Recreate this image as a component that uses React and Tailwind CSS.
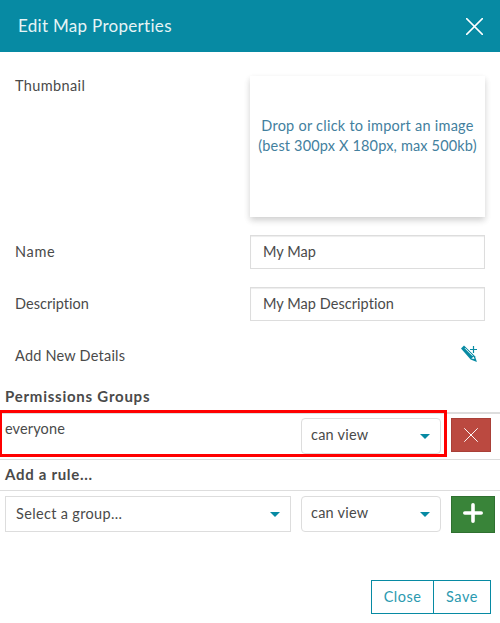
import React from 'react';

function Caret() {
  return (
    <svg width="10" height="5" viewBox="0 0 10 5" className="shrink-0">
      <path d="M0 0H10L5 5Z" fill="#078aa3" />
    </svg>
  );
}

function Cross({ size, stroke }) {
  return (
    <svg width={size} height={size} viewBox="0 0 16 16" fill="none" stroke="#fff" strokeWidth={stroke} strokeLinecap="round">
      <path d="M.6.6 15.4 15.4M15.4.6.6 15.4" />
    </svg>
  );
}

function PermissionSelect() {
  return (
    <div className="ml-[10px] flex h-9 w-[140px] shrink-0 items-center justify-between rounded border border-[#ddd] bg-white pl-[9px] pr-[10px]">
      <span className="-mt-[2px] tracking-[0.24px]">can view</span>
      <Caret />
    </div>
  );
}

function Field({ label, labelClass, value, valueClass }) {
  return (
    <div className="mb-[18px] flex h-[34px] items-center">
      <div className="w-[235px] shrink-0">
        <span className={labelClass}>{label}</span>
      </div>
      <div className="flex h-[34px] w-[235px] items-center border border-[#ddd] pl-3 shadow-[inset_0_1px_1px_rgba(0,0,0,0.075)]">
        <span className={valueClass}>{value}</span>
      </div>
    </div>
  );
}

export default function App() {
  return (
    <div className="relative flex h-[623px] w-[500px] flex-col overflow-hidden bg-white font-['Lato',sans-serif] text-[14.5px] leading-5 whitespace-nowrap text-[#4a4a4a]">
      <header className="flex h-[52px] shrink-0 items-center justify-between bg-[#078aa3] pr-[17px] pl-[18px] text-[#e6f4f6]">
        <h1 className="text-[17px] tracking-[0.3px]">Edit Map Properties</h1>
        <Cross size={17} stroke={1.4} />
      </header>

      <main className="px-[15px] pt-6">
        <div className="mb-[18px] flex h-[141px]">
          <div className="w-[235px] shrink-0">
            <span className="tracking-[0.38px]">Thumbnail</span>
          </div>
          <div className="flex w-[235px] flex-col items-center pt-10 text-[#43809e] shadow-[0_3px_6px_rgba(0,0,0,0.14),0_4px_8px_rgba(0,0,0,0.06)]">
            <span className="tracking-[0.25px]">Drop or click to import an image</span>
            <span className="tracking-[0.16px]">(best 300px X 180px, max 500kb)</span>
          </div>
        </div>
        <Field label="Name" labelClass="tracking-[0.7px]" value="My Map" valueClass="tracking-[0.05px]" />
        <Field label="Description" labelClass="tracking-[0.03px]" value="My Map Description" valueClass="tracking-[0.05px]" />
        <div className="flex h-[34px] items-center justify-between">
          <span className="tracking-[0.22px]">Add New Details</span>
          <svg width="18" height="18" viewBox="0 0 18 18" className="mr-[7px] -mt-[6px]" fill="none">
            <path d="M1 4.5 4 1.6 15 12.2 16.9 18 10.6 15.6Z" fill="#078aa3" />
            <path d="M5 4.2 12.6 11.8" stroke="#fff" strokeWidth="1" />
            <path d="M11.4 14.4 13.6 12.4 14.5 15Z" fill="#fff" />
            <path d="M13.5 2V9M10 5.5H17" stroke="#078aa3" strokeWidth="1.2" />
          </svg>
        </div>
      </main>

      <section>
        <h2 className="flex h-[41px] items-center border-b-2 border-[#ddd] pt-[6px] pl-[5px] text-[15px] font-bold">
          <span className="tracking-[0.76px]">Permissions Groups</span>
        </h2>
        <div className="relative flex h-[46px] border-b border-[#ddd] pt-1 pl-[5px]">
          <div className="w-[286px] shrink-0 pt-px">
            <span className="tracking-[0.12px]">everyone</span>
          </div>
          <PermissionSelect />
          <button className="ml-[10px] flex h-[34px] w-10 items-center justify-center border border-[#a94038] bg-[#bb4940]">
            <Cross size={14} stroke={1.1} />
          </button>
          <div className="absolute -top-1 -left-px h-[47px] w-[448px] border-[3px] border-[#ff0000]" />
        </div>
        <h2 className="flex h-[31px] items-center border-b border-[#ddd] pb-[2px] pl-[5px] text-[15px] font-bold">
          <span className="tracking-[0.7px]">Add a rule...</span>
        </h2>
        <div className="flex pt-[5px] pl-[5px]">
          <div className="flex h-9 w-[286px] items-center justify-between border border-[#ddd] pr-[10px] pl-[10px]">
            <span className="tracking-[0.33px]">Select a group...</span>
            <Caret />
          </div>
          <PermissionSelect />
          <button className="ml-[10px] flex h-[37px] w-11 items-center justify-center border border-[#2f7030] bg-[#398439] pb-[3px]">
            <svg width="20" height="20" viewBox="0 0 20 20" stroke="#fff" strokeWidth="3.6" strokeLinecap="round">
              <path d="M10 1.8V18.2M1.8 10H18.2" />
            </svg>
          </button>
        </div>
      </section>

      <footer className="mt-[47px] mr-[9px] flex justify-end text-[#2b9ab0]">
        <button className="flex h-[34px] w-[63px] items-center justify-center border border-[#078aa3]">
          <span className="tracking-[0.46px]">Close</span>
        </button>
        <button className="-ml-px flex h-[34px] w-[58px] items-center justify-center border border-[#078aa3]">
          <span className="tracking-[0.5px]">Save</span>
        </button>
      </footer>
    </div>
  );
}
